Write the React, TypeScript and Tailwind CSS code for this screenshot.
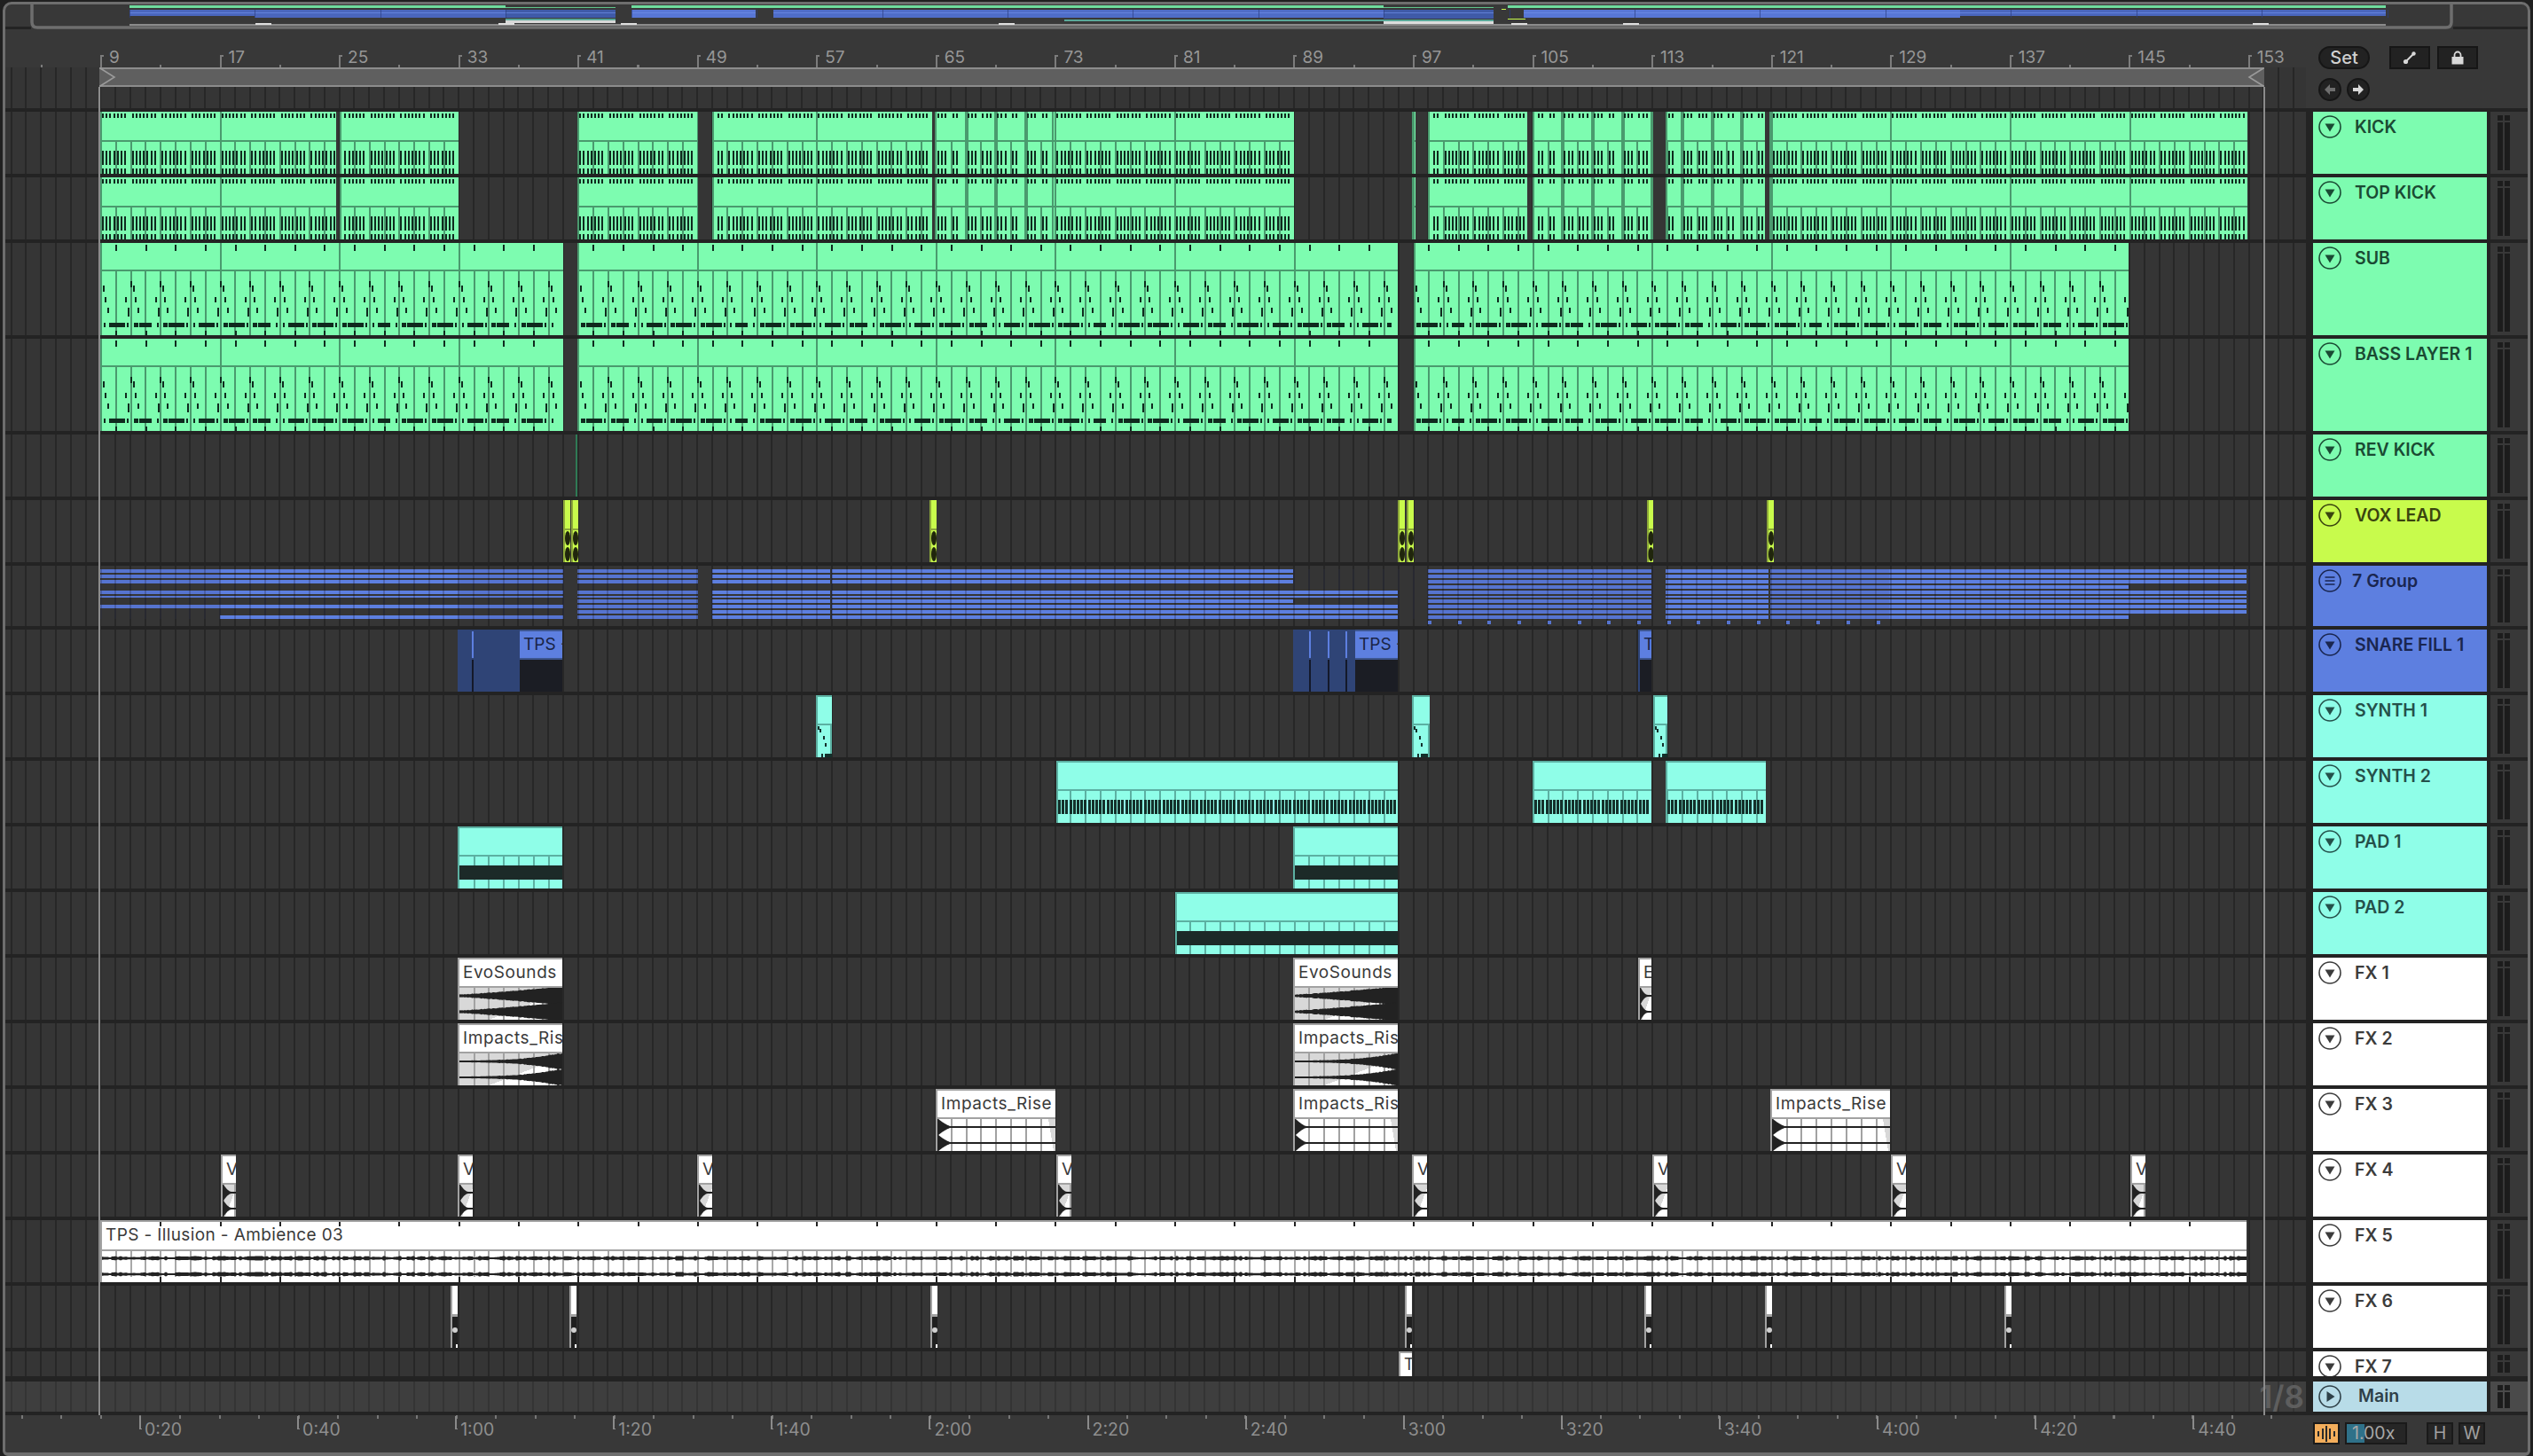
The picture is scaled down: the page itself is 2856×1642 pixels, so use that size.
import type { ReactNode } from "react";

// arrangement geometry: one bar is 16.82px, bar 9 sits at x=113, lanes start at x=6
const barX = (b: number) => 113 + (b - 9) * 16.82;
const allBars = Array.from({ length: 145 }, (_, i) => 9 + i);
const barsIn = (from: number, to: number) => allBars.map(barX).filter((x) => x > from + 1 && x < to - 1);
const noise = (i: number) => (Math.sin(i * 12.9898) * 43758.5453) % 1;

const GRID =
  "bg-[repeating-linear-gradient(90deg,#353535_0,#353535_5.58px,#272727_5.58px,#272727_7.58px,#353535_7.58px,#353535_16.82px)]";
const GRID_MAIN =
  "bg-[repeating-linear-gradient(90deg,#3e3e3e_0,#3e3e3e_5.58px,#343434_5.58px,#343434_7.58px,#3e3e3e_7.58px,#3e3e3e_16.82px)]";

const GREEN = "#7dfcb0";
const GREEN_LINE = "#4a9a6e";
const AQUA = "#8ffee8";
const AQUA_LINE = "#5cb0a2";
const LIME = "#c8fb4c";
const BLUE = "#5d7fe0";
const INK = "#0f2a1e";

function Svg({ from, to, h, nested, children }: { from: number; to: number; h: number; nested?: boolean; children: ReactNode }) {
  return (
    <svg
      className="absolute top-0 block"
      style={{ left: nested ? 0 : from - 6, width: to - from, height: h }}
      viewBox={`${from} 0 ${to - from} ${h}`}
      shapeRendering="crispEdges"
    >
      {children}
    </svg>
  );
}

function KickClip({ from, to, dense = false }: { from: number; to: number; dense?: boolean }) {
  const ticks: number[] = [];
  for (let k = 0; k < 600; k++) {
    const x = 113 + k * 4.205 + 2;
    if (x < from + 2 || x > to - 3) continue;
    if (dense ? k % 8 === 3 || k % 8 === 7 || k % 16 === 6 : k % 8 === 7) continue;
    ticks.push(x);
  }
  return (
    <Svg from={from} to={to} h={70}>
      <rect x={from} y={0} width={to - from} height={70} fill={GREEN} />
      <rect x={from} y={0} width={2} height={70} fill={GREEN_LINE} />
      <rect x={from} y={32} width={to - from} height={2} fill={GREEN_LINE} />
      {barsIn(from, to).map((x) => (
        <rect key={x} x={x} y={34} width={2} height={36} fill={GREEN_LINE} />
      ))}
      {allBars
        .filter((b) => (b - 9) % 8 === 0)
        .map(barX)
        .filter((x) => x > from + 1 && x < to)
        .map((x) => (
          <rect key={x} x={x} y={0} width={2} height={32} fill={GREEN_LINE} />
        ))}
      {dense &&
        barsIn(from, to)
          .filter((_, i) => i % 2 === 1)
          .map((x) => <rect key={x} x={x - 1} y={0} width={4} height={70} fill={GREEN_LINE} />)}
      {ticks.map((x) => (
        <g key={x} fill={INK}>
          <rect x={x} y={2} width={2} height={5} />
          <rect x={x} y={44} width={2} height={16} />
          <rect x={x} y={64} width={2} height={6} />
        </g>
      ))}
    </Svg>
  );
}

function BassClip({ from, to }: { from: number; to: number }) {
  const steps: number[] = [];
  for (let s = 0; s < 80; s++) steps.push(113 + s * 33.64);
  const inside = (x: number) => x >= from + 2 && x <= to - 2;
  return (
    <Svg from={from} to={to} h={104}>
      <rect x={from} y={0} width={to - from} height={104} fill={GREEN} />
      <rect x={from} y={0} width={2} height={104} fill={GREEN_LINE} />
      <rect x={from} y={30} width={to - from} height={2} fill={GREEN_LINE} />
      {barsIn(from, to).map((x) => (
        <rect key={x} x={x} y={32} width={2} height={72} fill={GREEN_LINE} />
      ))}
      {allBars
        .filter((b) => (b - 9) % 8 === 0)
        .map(barX)
        .filter((x) => x > from + 1 && x < to)
        .map((x) => (
          <rect key={x} x={x} y={0} width={2} height={30} fill={GREEN_LINE} />
        ))}
      {steps.map((x0, s) => (
        <g key={x0} fill={INK}>
          {inside(x0 + 17) && <rect x={x0 + 17} y={2} width={2} height={7} />}
          {inside(x0 + 17) && <rect x={x0 + 17} y={99} width={2} height={5} />}
          {inside(x0) && <rect x={x0} y={43} width={2} height={7} />}
          {inside(x0 + 3) && <rect x={x0 + 3} y={48} width={2} height={7} />}
          {inside(x0 + 5) && <rect x={x0 + 5} y={61} width={2} height={6} />}
          {inside(x0 + 28) && <rect x={x0 + 28} y={61} width={2} height={6} />}
          {inside(x0 + 8) && <rect x={x0 + 8} y={73} width={2} height={6} />}
          {inside(x0 + 31) && <rect x={x0 + 31} y={73} width={2} height={10} />}
          {inside(x0 + 4) && inside(x0 + 8) && <rect x={x0 + 4} y={90} width={s % 3 === 0 ? 2 : 5} height={5} />}
          {inside(x0 + 10) && inside(x0 + 28) && <rect x={x0 + 10} y={90} width={s % 4 === 1 ? 14 : 18} height={5} />}
          {inside(x0 + 30) && <rect x={x0 + 30} y={90} width={2} height={5} />}
        </g>
      ))}
    </Svg>
  );
}

function AquaClip({ from, to, kind }: { from: number; to: number; kind: "ticks" | "solid" }) {
  const ticks: number[] = [];
  for (let x = from + 2; x < to - 2; x += 4.2) ticks.push(x);
  return (
    <Svg from={from} to={to} h={70}>
      <rect x={from} y={0} width={to - from} height={70} fill={AQUA} />
      <rect x={from} y={0} width={2} height={70} fill={AQUA_LINE} />
      <rect x={from} y={0} width={to - from} height={2} fill={AQUA_LINE} />
      <rect x={from} y={32} width={to - from} height={2} fill={AQUA_LINE} />
      {barsIn(from, to).map((x) => (
        <rect key={x} x={x} y={34} width={2} height={36} fill={AQUA_LINE} />
      ))}
      {kind === "solid" && <rect x={from + 2} y={44} width={to - from - 2} height={16} fill="#1c2a28" />}
      {kind === "ticks" &&
        ticks.map((x) => <rect key={x} x={x} y={44} width={3} height={16} fill="#14302b" />)}
    </Svg>
  );
}

function SynthStub({ from, to }: { from: number; to: number }) {
  return (
    <Svg from={from} to={to} h={70}>
      <rect x={from} y={0} width={to - from} height={70} fill={AQUA} />
      <rect x={from} y={0} width={2} height={70} fill={AQUA_LINE} />
      <rect x={from} y={0} width={to - from} height={2} fill={AQUA_LINE} />
      <rect x={from} y={32} width={to - from} height={2} fill={AQUA_LINE} />
      <rect x={to - 2} y={34} width={2} height={36} fill={AQUA_LINE} />
      <g fill="#14302b">
        <rect x={from + 2} y={35} width={2} height={4} />
        <rect x={from + 4} y={38} width={2} height={4} />
        <rect x={from + 8} y={46} width={2} height={4} />
        <rect x={from + 10} y={54} width={2} height={4} />
        <rect x={from + 6} y={66} width={2} height={4} />
        <rect x={from + 10} y={66} width={8} height={4} />
      </g>
    </Svg>
  );
}

function VoxClip({ from, to }: { from: number; to: number }) {
  const cx = (from + to) / 2 + 1;
  return (
    <Svg from={from} to={to} h={70}>
      <rect x={from} y={0} width={to - from} height={70} fill={LIME} />
      <rect x={from} y={0} width={2} height={70} fill="#8da83a" />
      <rect x={from} y={32} width={to - from} height={2} fill="#8da83a" />
      <g fill="#20260c" shapeRendering="auto">
        <ellipse cx={cx} cy={43} rx={3} ry={8} />
        <ellipse cx={cx} cy={61} rx={3} ry={8} />
      </g>
    </Svg>
  );
}

function SnareClip({ from, split, to, lines = [], label }: { from: number; split: number; to: number; lines?: number[]; label: string }) {
  return (
    <div className="absolute top-0 h-full overflow-hidden" style={{ left: from - 6, width: to - from }}>
      <Svg from={from} to={to} h={70} nested>
        <rect x={from} y={0} width={split - from} height={70} fill="#2f4476" />
        {lines.map((x) => (
          <g key={x}>
            <rect x={x} y={2} width={2} height={30} fill={BLUE} />
            <rect x={x} y={34} width={2} height={36} fill="#14192a" />
          </g>
        ))}
        <rect x={split} y={0} width={to - split} height={2} fill="#3d558f" />
        <rect x={split} y={2} width={to - split} height={30} fill={BLUE} />
        <rect x={split} y={32} width={to - split} height={2} fill="#3d558f" />
        <rect x={split} y={34} width={to - split} height={36} fill="#1b1d24" />
      </Svg>
      <span
        className="absolute top-[3px] overflow-hidden whitespace-nowrap font-['Inter',sans-serif] text-[19px] leading-[28px] text-[#1a2546]"
        style={{ left: split - from + 4 }}
      >
        {label}
      </span>
    </div>
  );
}

function wavePath(from: number, to: number, c: number, amp: (t: number, i: number) => number) {
  const top: string[] = [];
  const bot: string[] = [];
  for (let x = from; x <= to; x += 1) {
    const t = (x - from) / Math.max(to - from, 1);
    const a = amp(t, x);
    top.push(`${x},${(c - a).toFixed(1)}`);
    bot.unshift(`${x},${(c + a).toFixed(1)}`);
  }
  return `M${top.join(" ")} L${bot.join(" ")} Z`;
}

type WaveKind = "rise" | "bulge" | "decay" | "hit";

function AudioClip({ from, to, label, kind }: { from: number; to: number; label: string; kind: WaveKind }) {
  const amp = (t: number, i: number) => {
    const n = Math.abs(noise(i));
    if (kind === "rise") return 1 + 9 * Math.pow(t, 1.2) + n * 0.8;
    if (kind === "bulge") return 1 + 8 * Math.pow(t, 3) + n * 1.2 * t;
    if (kind === "decay") return 1 + 9 * Math.pow(Math.max(1 - t * 9, 0), 1.4);
    return 1 + 10 * Math.pow(Math.max(1 - t * 1.4, 0), 2);
  };
  const w = to - from;
  return (
    <div className="absolute top-0 h-full overflow-hidden" style={{ left: from - 6, width: w }}>
      <Svg from={from} to={to} h={70} nested>
        <rect x={from} y={0} width={w} height={70} fill="#ffffff" />
        {kind !== "decay" ? (
          <polygon points={`${from},34 ${to},34 ${to},38 ${from + w * 0.3},70 ${from},70`} fill="#d8d8d8" />
        ) : (
          <polygon points={`${to - 8},34 ${to},34 ${to},70 ${to - 2},70`} fill="#d8d8d8" />
        )}
        {barsIn(from, to).map((x) => (
          <rect key={x} x={x} y={34} width={2} height={36} fill="#a2a2a2" />
        ))}
        <g fill="#222222" shapeRendering="auto">
          <path d={wavePath(from + 2, to, 43, amp)} />
          <path d={wavePath(from + 2, to, 61, amp)} />
        </g>
        <rect x={from} y={0} width={w} height={2} fill="#a2a2a2" />
        <rect x={from} y={0} width={2} height={70} fill="#a2a2a2" />
        <rect x={from} y={32} width={w} height={2} fill="#a2a2a2" />
      </Svg>
      <span className="absolute left-[6px] top-[2px] whitespace-nowrap font-['Inter',sans-serif] text-[19px] leading-[30px] tracking-[0.03em] text-[#3a3a3a]">
        {label}
      </span>
    </div>
  );
}

function NarrowClip({ from }: { from: number }) {
  const to = from + 8;
  return (
    <Svg from={from} to={to} h={70}>
      <rect x={from} y={0} width={8} height={32} fill="#ffffff" />
      <rect x={from} y={32} width={8} height={38} fill="#1f1f1f" />
      <rect x={from} y={32} width={8} height={3} fill="#a2a2a2" />
      <rect x={from} y={0} width={2} height={70} fill="#a2a2a2" />
      <ellipse cx={from + 5} cy={50} rx={3} ry={3} fill="#d0d0d0" shapeRendering="auto" />
      <rect x={from + 6} y={66} width={2} height={4} fill="#ffffff" />
    </Svg>
  );
}

function Ambience() {
  const from = 113;
  const to = 2533;
  const amp = (_: number, i: number) => 1 + Math.abs(noise(Math.floor(i / 3))) * 1.6;
  const fours = allBars.filter((b) => (b - 9) % 4 === 0).map(barX);
  return (
    <div className="absolute top-0 h-full overflow-hidden" style={{ left: from - 6, width: to - from }}>
      <Svg from={from} to={to} h={70} nested>
        <rect x={from} y={0} width={to - from} height={70} fill="#ffffff" />
        <rect x={from} y={33} width={to - from} height={2} fill="#a2a2a2" />
        {barsIn(from, to).map((x) => (
          <rect key={x} x={x} y={35} width={2} height={29} fill="#a8a8a8" />
        ))}
        <g fill="#222222" shapeRendering="auto">
          <path d={wavePath(from, to, 43, amp)} />
          <path d={wavePath(from, to, 61, amp)} />
        </g>
        {fours.map((x) => (
          <g key={x} fill="#222222">
            <rect x={x} y={2} width={2} height={5} />
            <rect x={x} y={64} width={2} height={6} />
          </g>
        ))}
        <rect x={from} y={0} width={2} height={70} fill="#a2a2a2" />
        <rect x={from} y={0} width={to - from} height={2} fill="#a2a2a2" />
      </Svg>
      <span className="absolute left-[6px] top-[2px] whitespace-nowrap font-['Inter',sans-serif] text-[19px] leading-[30px] tracking-[0.02em] text-[#3a3a3a]">
        TPS - Illusion - Ambience 03
      </span>
    </div>
  );
}

const LANES_A = [4, 10, 16, 28, 34, 44];
const LANES_B = [4, 10, 16, 28, 34, 38, 44, 50, 56];
const LANES_C = [4, 10, 16, 22, 28, 34, 38, 44, 50, 56];
const GROUP_SPANS: { from: number; to: number; ys: number[]; dim?: boolean }[] = [
  { from: 113, to: 248, ys: LANES_A, dim: true },
  { from: 248, to: 516, ys: [...LANES_A, 56] },
  { from: 516, to: 635, ys: [...LANES_A, 56], dim: true },
  { from: 651, to: 787, ys: LANES_B, dim: true },
  { from: 803, to: 936, ys: LANES_B },
  { from: 938, to: 1458, ys: LANES_B },
  { from: 1458, to: 1576, ys: [28, 34, 44, 50, 56] },
  { from: 1610, to: 1862, ys: LANES_C, dim: true },
  { from: 1878, to: 1994, ys: LANES_C },
  { from: 1996, to: 2130, ys: LANES_C, dim: true },
  { from: 2130, to: 2400, ys: LANES_C },
  { from: 2400, to: 2533, ys: LANES_B.filter((y) => y !== 56) },
];

function GroupLanes() {
  const dots: number[] = [];
  for (let x = 1610; x < 2130; x += 33.7) dots.push(x);
  return (
    <Svg from={6} to={2600} h={68}>
      {GROUP_SPANS.map((s) =>
        s.ys.map((y) => (
          <rect
            key={`${s.from}-${y}`}
            x={s.from}
            y={y}
            width={s.to - s.from}
            height={y === 34 ? 2 : 4}
            fill={s.dim ? "#5674d0" : BLUE}
          />
        )),
      )}
      {dots.map((x) => (
        <rect key={x} x={x} y={62} width={4} height={4} fill="#5674d0" />
      ))}
      {allBars.map(barX).map((x) => (
        <rect key={x} x={x - 0.5} y={4} width={2} height={56} fill="#2a2f44" opacity={0.3} />
      ))}
    </Svg>
  );
}

function Lane({ index }: { index: number }) {
  switch (index) {
    case 0:
    case 1:
      return (
        <>
          <KickClip from={113} to={379} />
          <KickClip from={383} to={517} />
          <KickClip from={651} to={787} />
          <KickClip from={803} to={1051} />
          <KickClip from={1054} to={1186} dense />
          <KickClip from={1186} to={1459} />
          <KickClip from={1592} to={1596} />
          <KickClip from={1610} to={1722} />
          <KickClip from={1728} to={1864} dense />
          <KickClip from={1878} to={1990} dense />
          <KickClip from={1995} to={2534} />
        </>
      );
    case 2:
    case 3:
      return (
        <>
          <BassClip from={113} to={635} />
          <BassClip from={651} to={1576} />
          <BassClip from={1594} to={2400} />
        </>
      );
    case 4:
      return <div className="absolute left-[643px] top-0 h-full w-[2px] bg-[#2f7a55]" />;
    case 5:
      return (
        <>
          <VoxClip from={635} to={643} />
          <VoxClip from={644} to={652} />
          <VoxClip from={1048} to={1056} />
          <VoxClip from={1576} to={1584} />
          <VoxClip from={1586} to={1594} />
          <VoxClip from={1857} to={1864} />
          <VoxClip from={1992} to={2000} />
        </>
      );
    case 6:
      return <GroupLanes />;
    case 7:
      return (
        <>
          <SnareClip from={516} split={586} to={634} lines={[532]} label="TPS -" />
          <SnareClip from={1458} split={1528} to={1576} lines={[1476, 1497, 1517]} label="TPS -" />
          <SnareClip from={1847} split={1849} to={1862} label="T" />
        </>
      );
    case 8:
      return (
        <>
          <SynthStub from={920} to={938} />
          <SynthStub from={1592} to={1612} />
          <SynthStub from={1864} to={1880} />
        </>
      );
    case 9:
      return (
        <>
          <AquaClip from={1191} to={1576} kind="ticks" />
          <AquaClip from={1728} to={1862} kind="ticks" />
          <AquaClip from={1878} to={1991} kind="ticks" />
        </>
      );
    case 10:
      return (
        <>
          <AquaClip from={516} to={634} kind="solid" />
          <AquaClip from={1458} to={1576} kind="solid" />
        </>
      );
    case 11:
      return <AquaClip from={1325} to={1576} kind="solid" />;
    case 12:
      return (
        <>
          <AudioClip from={516} to={634} label="EvoSounds" kind="rise" />
          <AudioClip from={1458} to={1576} label="EvoSounds" kind="rise" />
          <AudioClip from={1847} to={1862} label="E" kind="hit" />
        </>
      );
    case 13:
      return (
        <>
          <AudioClip from={516} to={634} label="Impacts_Ris" kind="bulge" />
          <AudioClip from={1458} to={1576} label="Impacts_Ris" kind="bulge" />
        </>
      );
    case 14:
      return (
        <>
          <AudioClip from={1055} to={1190} label="Impacts_Rise" kind="decay" />
          <AudioClip from={1458} to={1576} label="Impacts_Ris" kind="decay" />
          <AudioClip from={1996} to={2131} label="Impacts_Rise" kind="decay" />
        </>
      );
    case 15:
      return (
        <>
          {[249, 516, 786, 1191, 1592, 1863, 2132, 2402].map((x) => (
            <AudioClip key={x} from={x} to={x + 17} label="V" kind="hit" />
          ))}
        </>
      );
    case 16:
      return <Ambience />;
    case 17:
      return (
        <>
          {[508, 642, 1049, 1584, 1854, 1990, 2260].map((x) => (
            <NarrowClip key={x} from={x} />
          ))}
        </>
      );
    case 18:
      return (
        <div className="absolute left-[1571px] top-0 h-[28px] w-[15px] overflow-hidden border-l-2 border-t-2 border-[#a2a2a2] bg-white pl-[4px] font-['Inter',sans-serif] text-[18px] leading-[26px] text-[#3a3a3a]">
          T
        </div>
      );
    default:
      return null;
  }
}

type Track = { name: string; h: number; bg: string; fg: string; icon?: "down" | "group" | "play" };

const green = { bg: "bg-[#7dfcb0]", fg: "text-[#1a4a33]" };
const aqua = { bg: "bg-[#8ffee8]", fg: "text-[#24504a]" };
const white = { bg: "bg-white", fg: "text-[#3c3c3c]" };

const tracks: Track[] = [
  { name: "KICK", h: 70, ...green },
  { name: "TOP KICK", h: 70, ...green },
  { name: "SUB", h: 104, ...green },
  { name: "BASS LAYER 1", h: 104, ...green },
  { name: "REV KICK", h: 70, ...green },
  { name: "VOX LEAD", h: 70, bg: "bg-[#c8fb4c]", fg: "text-[#3a440f]" },
  { name: "7 Group", h: 68, bg: "bg-[#5d7fe0]", fg: "text-[#1a2650]", icon: "group" },
  { name: "SNARE FILL 1", h: 70, bg: "bg-[#5d7fe0]", fg: "text-[#1a2650]" },
  { name: "SYNTH 1", h: 70, ...aqua },
  { name: "SYNTH 2", h: 70, ...aqua },
  { name: "PAD 1", h: 70, ...aqua },
  { name: "PAD 2", h: 70, ...aqua },
  { name: "FX 1", h: 70, ...white },
  { name: "FX 2", h: 70, ...white },
  { name: "FX 3", h: 70, ...white },
  { name: "FX 4", h: 70, ...white },
  { name: "FX 5", h: 70, ...white },
  { name: "FX 6", h: 70, ...white },
  { name: "FX 7", h: 28, ...white },
];

function TrackIcon({ icon = "down" }: { icon?: Track["icon"] }) {
  return (
    <svg viewBox="0 0 26 26" className="h-[26px] w-[26px] shrink-0" fill="currentColor">
      <circle cx="13" cy="13" r="12" fill="none" stroke="currentColor" strokeWidth="1.6" />
      {icon === "down" && <polygon points="7.5,9.5 18.5,9.5 13,18.5" />}
      {icon === "play" && <polygon points="9.5,7 9.5,19 18.5,13" />}
      {icon === "group" && (
        <g fill="none" stroke="currentColor" strokeWidth="1.6">
          <path d="M7.5 9H18.5M7.5 13H18.5M7.5 17H18.5" />
        </g>
      )}
    </svg>
  );
}

function Meter() {
  return (
    <div className="flex h-full gap-[2px] py-[4px] pl-[8px]">
      {[0, 1].map((i) => (
        <div key={i} className="flex h-full w-[6px] flex-col gap-[2px]">
          <div className="h-[6px] shrink-0 bg-[#1c1c1c]" />
          <div className="flex-1 bg-[#1c1c1c]" />
        </div>
      ))}
    </div>
  );
}

function TrackRow({ track, index }: { track: Track; index: number }) {
  return (
    <div className="flex shrink-0" style={{ height: track.h }}>
      <div className={`relative w-[2594px] overflow-hidden ${GRID}`}>
        <Lane index={index} />
      </div>
      <div className={`ml-[8px] flex w-[196px] overflow-hidden pl-[6px] pt-[4px] ${track.bg} ${track.fg}`}>
        <TrackIcon icon={track.icon} />
        <span
          className={`${track.icon === "group" ? "ml-[12px]" : "ml-[15px]"} font-['Inter',sans-serif] text-[19.5px] font-semibold leading-[26px] whitespace-nowrap`}
        >
          {track.name}
        </span>
      </div>
      <div className="ml-[4px] w-[42px] overflow-hidden bg-[#383838]">
        <Meter />
      </div>
    </div>
  );
}

function Overview() {
  const ox = (x: number) => 146 + (x - 113) * 1.051;
  const blue: [number, number, number, string][] = [
    [146, 287, 18, "#4a66bd"],
    [287, 570, 20, "#4a66bd"],
    [570, 694, 20, "#3f5aa8"],
    [712, 852, 20, "#5877d6"],
    [872, 1560, 20, "#4f6dc8"],
    [1560, 1684, 21, "#3f5aa8"],
    [1718, 2210, 20, "#5877d6"],
    [2210, 2690, 18, "#4a66bd"],
  ];
  return (
    <svg viewBox="6 5 2844 28" className="block h-[28px] w-[2844px] shrink-0" shapeRendering="crispEdges">
      <rect x="6" y="30" width="29" height="3" fill="#232323" />
      <rect x="2766" y="30" width="84" height="3" fill="#232323" />
      {[
        [146, 570],
        [712, 1560],
        [1700, 1718],
        [1718, 2690],
      ].map(([a, b]) => (
        <rect key={a} x={a} y={6} width={b - a} height={3} fill="#6fdc9e" />
      ))}
      <rect x={570} y={8} width={124} height={1} fill="#5fc48c" />
      <rect x={1560} y={8} width={124} height={1} fill="#5fc48c" />
      {blue.map(([a, b, e, c]) => (
        <g key={a}>
          <rect x={a} y={11} width={b - a} height={e - 11} fill={c} />
          <rect x={a} y={14} width={b - a} height={1} fill="#6f8ee8" opacity={0.7} />
        </g>
      ))}
      {allBars
        .filter((b) => (b - 9) % 8 === 0)
        .map(barX)
        .map(ox)
        .map((x) => (
          <rect key={x} x={x} y={11} width={1} height={9} fill="#2c3f80" opacity={0.7} />
        ))}
      <rect x={1200} y={22} width={484} height={2} fill="#5aa899" />
      <rect x={1560} y={24} width={124} height={3} fill="#dcdcdc" />
      <rect x={570} y={21} width={124} height={2} fill="#5aa899" />
      <rect x={570} y={23} width={124} height={3} fill="#d8d8d8" />
      <rect x={1700} y={21} width={20} height={1} fill="#c8fb4c" />
      <rect x={1693} y={10} width={5} height={1} fill="#c8fb4c" />
      <rect x={146} y={27} width={2544} height={2} fill="#8b8b8b" />
      {[288, 562, 700, 1126, 1704, 1830, 2540].map((x) => (
        <rect key={x} x={x} y={26} width={18} height={2} fill="#dedede" />
      ))}
      <path
        d="M36 5V25Q36 31 42 31H2758Q2764 31 2764 25V5"
        fill="none"
        stroke="#6e6e6e"
        strokeWidth="3.5"
        shapeRendering="auto"
      />
    </svg>
  );
}

const bar8 = allBars.filter((b) => (b - 9) % 8 === 0);

function HeaderRow() {
  return (
    <div className="flex h-[89px] shrink-0">
      <div className="flex w-[2594px] flex-col">
        <div className="flex h-[43px] shrink-0 pl-[107px]">
          {bar8.map((b) => (
            <div key={b} className="flex w-[134.56px] shrink-0">
              <div className="mt-[29px] h-[14px] w-[4px] border-l-2 border-t-2 border-[#7c7c7c]" />
              <span className="ml-[6px] mt-[21px] font-['Inter',sans-serif] text-[19px] leading-[22px] text-[#969696]">
                {b}
              </span>
            </div>
          ))}
        </div>
        <div className="-mt-[3px] h-[3px] shrink-0 bg-[repeating-linear-gradient(90deg,transparent_0,transparent_39.7px,#7c7c7c_39.7px,#7c7c7c_41.7px,transparent_41.7px,transparent_134.56px)]" />
        <div className="relative flex-1">
          <div className={`h-full ${GRID}`} />
          <div className="absolute left-[106px] top-0 h-[22px] w-[2441px] border-y-2 border-[#8c8c8c] bg-[#5f5f5f]" />
          <svg className="absolute left-[106px] top-0 h-[22px] w-[2441px]" viewBox="0 0 2441 22" fill="none">
            <path d="M1 1L17 11L1 21" stroke="#9a9a9a" strokeWidth="1.6" />
            <path d="M2440 1L2424 11L2440 21" stroke="#9a9a9a" strokeWidth="1.6" />
          </svg>
        </div>
      </div>
      <div className="ml-[14px] flex flex-col gap-[10px] pt-[19px]">
        <div className="flex items-center">
          <div className="flex h-[26px] w-[58px] items-center justify-center rounded-full border-2 border-[#161616] bg-[#222222] font-['Inter',sans-serif] text-[20px] font-medium leading-none text-[#d0d0d0]">
            Set
          </div>
          <div className="ml-[22px] flex h-[26px] w-[46px] items-center justify-center border-2 border-[#161616] bg-[#222222]">
            <svg viewBox="0 0 16 16" className="h-[16px] w-[16px]">
              <path d="M3 13L13 3" stroke="#d8d8d8" strokeWidth="2" />
              <circle cx="3.5" cy="12.5" r="2.6" fill="#d8d8d8" />
              <circle cx="12.5" cy="3.5" r="2.2" fill="#d8d8d8" />
            </svg>
          </div>
          <div className="ml-[8px] flex h-[26px] w-[46px] items-center justify-center border-2 border-[#161616] bg-[#222222]">
            <svg viewBox="0 0 16 16" className="h-[16px] w-[16px]" fill="none">
              <path d="M4.5 7V5A3.5 3.5 0 0 1 11.5 5V7" stroke="#d8d8d8" strokeWidth="1.8" />
              <rect x="1.5" y="7" width="13" height="8.5" fill="#d8d8d8" />
            </svg>
          </div>
        </div>
        <div className="flex gap-[6px]">
          <div className="flex h-[26px] w-[26px] items-center justify-center rounded-full border-2 border-[#161616] bg-[#222222]">
            <svg viewBox="0 0 14 14" className="h-[14px] w-[14px]" fill="#6e6e6e">
              <path d="M7 1L1 7L7 13V9H13V5H7Z" />
            </svg>
          </div>
          <div className="flex h-[26px] w-[26px] items-center justify-center rounded-full border-2 border-[#161616] bg-[#222222]">
            <svg viewBox="0 0 14 14" className="h-[14px] w-[14px]" fill="#d8d8d8">
              <path d="M7 1L13 7L7 13V9H1V5H7Z" />
            </svg>
          </div>
        </div>
      </div>
    </div>
  );
}

const times = ["0:20", "0:40", "1:00", "1:20", "1:40", "2:00", "2:20", "2:40", "3:00", "3:20", "3:40", "4:00", "4:20", "4:40"];

function Footer() {
  return (
    <div className="flex h-[42px] shrink-0">
      <div className="flex h-full w-[2594px] flex-col">
        <div className="h-[4px] shrink-0 bg-[repeating-linear-gradient(90deg,transparent_0,transparent_18px,#777777_18px,#777777_20px,transparent_20px,transparent_44.5px)]" />
        <div className="-mt-[3px] flex pl-[151px]">
          {times.map((t) => (
            <div key={t} className="flex w-[178.1px] shrink-0">
              <div className="h-[15px] w-[3px] border-b border-l-2 border-[#8a8a8a]" />
              <span className="ml-[3px] mt-[4px] font-['Inter',sans-serif] text-[19.5px] leading-[22px] text-[#8e8e8e]">
                {t}
              </span>
            </div>
          ))}
        </div>
      </div>
      <div className="ml-[8px] flex pt-[8px]">
        <div className="flex h-[25px] w-[30px] items-center justify-center border-2 border-[#1a1a1a] bg-[#f3ae5c]">
          <svg viewBox="0 0 22 18" className="h-[18px] w-[22px]" fill="#2a2a2a">
            <rect x="1" y="6" width="2" height="6" />
            <rect x="6" y="3" width="2" height="12" />
            <rect x="10" y="0" width="2" height="18" />
            <rect x="14" y="3" width="2" height="12" />
            <rect x="19" y="6" width="2" height="6" />
          </svg>
        </div>
        <div className="relative ml-[6px] h-[25px] w-[70px] overflow-hidden border-2 border-[#1a1a1a] bg-[#262626]">
          <div className="h-full w-[20px] bg-[#2f7189]" />
          <span className="absolute inset-0 pl-[6px] font-['Inter',sans-serif] text-[19.5px] leading-[21px] text-[#a8a8a8]">
            1.00x
          </span>
        </div>
        <div className="ml-[22px] flex h-[25px] w-[30px] items-center justify-center border-2 border-[#1a1a1a] bg-[#262626] font-['Inter',sans-serif] text-[19.5px] leading-none text-[#a0a0a0]">
          H
        </div>
        <div className="ml-[6px] flex h-[25px] w-[30px] items-center justify-center border-2 border-[#1a1a1a] bg-[#262626] font-['Inter',sans-serif] text-[19.5px] leading-none text-[#a0a0a0]">
          W
        </div>
      </div>
    </div>
  );
}

export default function App() {
  return (
    <div className="relative h-[1642px] w-[2856px] overflow-hidden bg-[#202020] px-[3px] pt-[2px]">
      <div className="flex h-full flex-col overflow-hidden rounded-t-[10px] rounded-b-[6px] border-x-[3px] border-b-4 border-t-[3px] border-[#6e6e6e] bg-[#383838]">
        <Overview />
        <HeaderRow />
        <div className="flex shrink-0 flex-col gap-[4px] bg-[#232323] py-[4px]">
          {tracks.map((t, i) => (
            <TrackRow key={t.name} track={t} index={i} />
          ))}
          <div className="mt-[2px] flex h-[34px] shrink-0">
            <div className={`relative w-[2594px] overflow-hidden ${GRID_MAIN}`}>
              <span className="absolute right-[2px] top-[-1px] font-['Inter',sans-serif] text-[35px] font-semibold leading-[36px] text-[#5e5e5e]">
                1/8
              </span>
            </div>
            <div className="ml-[8px] flex w-[196px] items-center bg-[#b8dce8] pl-[6px] text-[#2f4048]">
              <TrackIcon icon="play" />
              <span className="ml-[19px] font-['Inter',sans-serif] text-[19.5px] font-semibold leading-none">Main</span>
            </div>
            <div className="ml-[4px] w-[42px] overflow-hidden bg-[#4a4a4a]">
              <Meter />
            </div>
          </div>
        </div>
        <Footer />
      </div>
      <div className="absolute left-[111px] top-[98px] h-[1498px] w-[2px] bg-[#8c8c8c]" />
      <div className="absolute left-[2552px] top-[98px] h-[1498px] w-[2px] bg-[#8c8c8c]" />
    </div>
  );
}
